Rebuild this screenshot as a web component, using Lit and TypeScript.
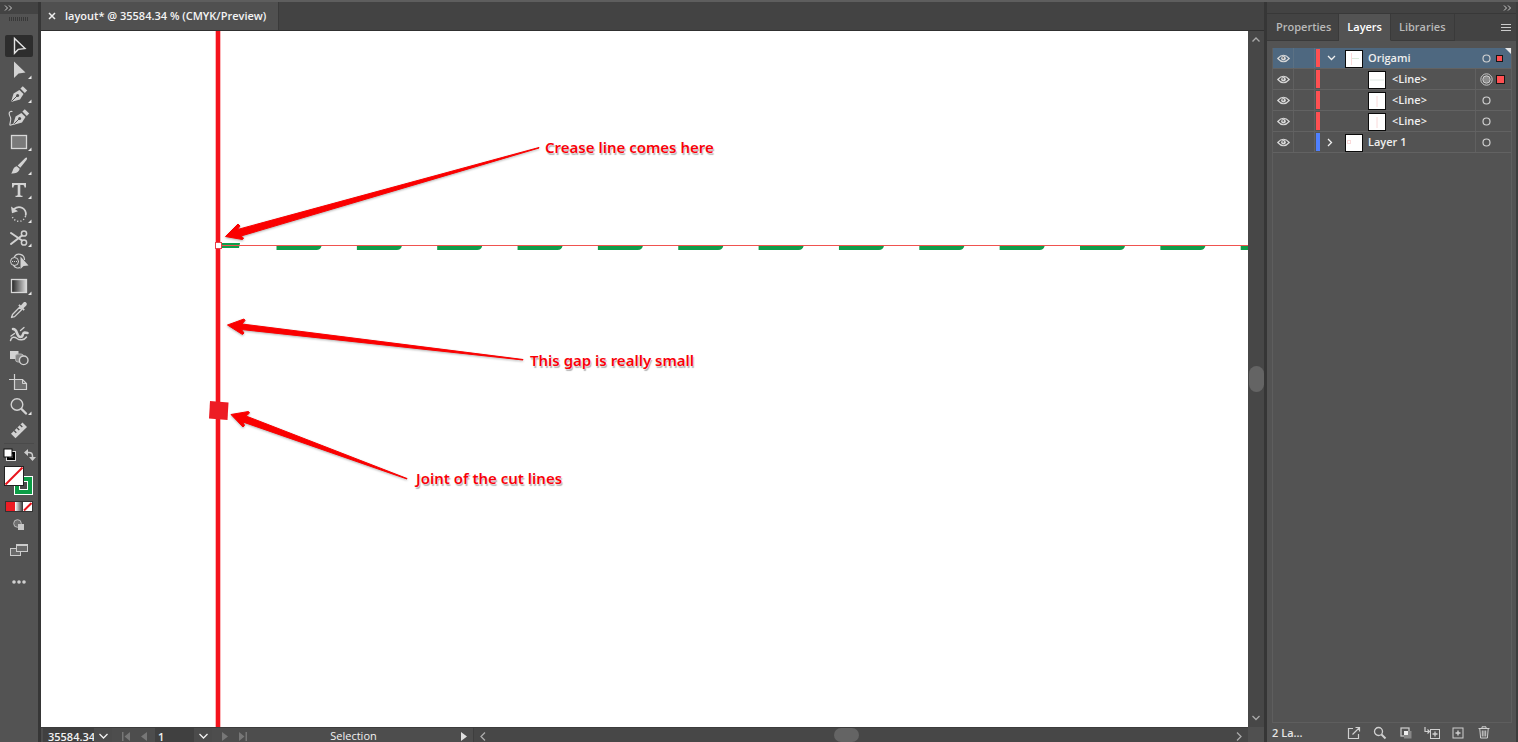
import { LitElement, html, svg, css, nothing } from "lit";
import { customElement, property } from "lit/decorators.js";

const base = css`
  * { box-sizing: border-box; }
  button {
    display: flex; align-items: center; justify-content: center;
    margin: 0; padding: 0; border: 0; background: none; color: inherit; font: inherit;
  }
  svg { display: block; flex: none; }
`;

const line = (d: string, w = 1.3) => svg`<path d=${d} fill="none" stroke="#d2d2d2" stroke-width=${w} stroke-linecap="round" stroke-linejoin="round"/>`;
const solid = (d: string) => svg`<path d=${d} fill="#d2d2d2" fill-rule="evenodd"/>`;

interface Tool { name: string; more?: boolean; art: unknown; }

const nib = svg`
  <path d="M6 19 L8.6 10.6 L14.4 7 L18.5 11 L15 16.6Z" fill="#d2d2d2"/>
  <path d="M15.4 5.6 L17.8 3.2 L22.2 7.6 L19.8 10Z" fill="#d2d2d2"/>
  <path d="M6.4 18.6 L12 13" stroke="#505050"/><circle cx="12.6" cy="12.5" r="1.5" fill="#505050"/>`;

const tools: Tool[] = [
  { name: "Selection", art: svg`<path d="M9.5 3.5 V18.2 L13.2 14.4 L20 13.6Z" fill="none" stroke="#e4e4e4" stroke-width="1.4"/>` },
  { name: "Direct Selection", more: true, art: solid("M9 2.5 V19 L13.6 14.6 L20.5 13.6Z") },
  { name: "Pen", more: true, art: nib },
  { name: "Curvature", art: svg`<g transform="translate(2 -1)">${nib}</g>${line("M7 4.5 C3 4 4 8 5.500 10.500 C7 13.500 3 19 6 18 L9 17", 1.2)}` },
  { name: "Rectangle", more: true, art: svg`<rect x="6.500" y="4.500" width="15" height="13" fill="#7a7a7a" stroke="#d8d8d8" stroke-width="1.300"/>` },
  { name: "Paintbrush", more: true, art: svg`${solid("M21.600 2.500 C22.500 3 22 4.200 21.300 5.200 L15.300 12.700 L12.600 10.400 L20 3.300 C20.600 2.700 21.200 2.300 21.600 2.500Z")}${solid("M11.800 11.300 L14.600 13.700 C14.300 17 10.500 18.700 6 18.600 C8 17.600 7.500 12 11.800 11.300Z")}` },
  { name: "Type", more: true, art: solid("M7 4 H21 V8.600 H19.500 C19.300 6.600 18.900 6 17 6 H15.300 V15.500 C15.300 16.500 15.800 16.700 17.500 16.800 V18 H10.500 V16.800 C12.200 16.700 12.700 16.500 12.700 15.500 V6 H11 C9.100 6 8.700 6.600 8.500 8.600 H7Z") },
  { name: "Rotate", more: true, art: svg`${line("M9 6 C15 1.500 21.500 6 20.800 12", 1.700)}${solid("M6 3.500 L7 10.200 L13 8.200Z")}<path d="M20.600 13 C18.500 20 9 20.500 6.600 12" fill="none" stroke="#d2d2d2" stroke-width="1.400" stroke-dasharray="1.200 2"/>` },
  { name: "Scissors", more: true, art: svg`${line("M6 6 L17 13.500 M6 17 L17 8.500", 2)}<circle cx="19" cy="6.500" r="2.600" fill="none" stroke="#d2d2d2" stroke-width="1.500"/><circle cx="19" cy="15.500" r="2.600" fill="none" stroke="#d2d2d2" stroke-width="1.500"/>` },
  { name: "Shape Builder", art: svg`<circle cx="9.500" cy="10.500" r="4" fill="none" stroke="#d2d2d2"/><path d="M9 6.500 A5.500 5.500 0 0 1 19.500 9 M8.500 14 C9.500 17 13 17.500 15 16.500" fill="none" stroke="#d2d2d2" stroke-width="1.200"/><path d="M7 10.500 H15" stroke="#d2d2d2" stroke-dasharray="1 1"/>${solid("M15.500 5.500 V18 L18.600 15 L23.500 14.400Z")}` },
  { name: "Gradient", more: true, art: svg`<defs><linearGradient id="g"><stop stop-color="#222"/><stop offset="1" stop-color="#ddd"/></linearGradient></defs><rect x="6.500" y="4.500" width="15" height="13" fill="url(#g)" stroke="#d8d8d8" stroke-width="1.300"/>` },
  { name: "Eyedropper", art: svg`${line("M6.500 18.500 L7.500 15.500 L14.600 8.300 L16.800 10.500 L9.600 17.600Z", 1.300)}${solid("M13.300 6.500 L14.600 5.300 L15.900 6.500 L18.500 3.600 C20.200 2 23 4.500 21.300 6.500 L18.500 9.200 L19.800 10.500 L18.500 11.800Z")}` },
  { name: "Puppet Warp", art: svg`${line("M8 6 C13 6 11 13 15 14 C19 14.500 17 9.500 19.500 9.500 L22.500 10", 2.600)}${line("M5.500 17.500 C6.500 13.500 9.500 13.500 12 15.500 C14.500 17.500 19 17.500 21.500 14", 1.500)}${line("M15.500 7.500 L19 4.500 M6 13 L9.500 10.500", 1.300)}` },
  { name: "Blend", art: svg`<rect x="5" y="4" width="8.500" height="8" fill="#d2d2d2"/><rect x="10.500" y="7" width="8" height="8" rx="2.500" fill="#858585" stroke="#b5b5b5"/><circle cx="18.700" cy="13.300" r="4.300" fill="#555" stroke="#d2d2d2" stroke-width="1.400"/>` },
  { name: "Artboard", art: svg`<path d="M9.500 8.500 H17.500 L21.500 12.500 V18.500 H9.500Z" fill="#707070" stroke="#d2d2d2" stroke-width="1.200"/><path d="M17.500 8.500 V12.500 H21.500" fill="none" stroke="#d2d2d2"/><path d="M4 8.500 H9 M9.500 3 V8" stroke="#d2d2d2" stroke-width="1.200"/>` },
  { name: "Zoom", more: true, art: svg`<circle cx="12" cy="9.500" r="5.800" fill="#5c5c5c" stroke="#d2d2d2" stroke-width="1.400"/>${line("M16.500 14 L21 18.500", 2.400)}` },
  { name: "Measure", art: svg`<path d="M6 14.800 L17.500 3.500 L22 8 L10.500 19.200Z" fill="#d2d2d2"/><path d="M9 11.500 L11.300 13.800 M12 8.700 L14.300 11 M15 5.700 L17.300 8" stroke="#505050" stroke-width="1.300"/>` },
];

@customElement("tool-bar")
class ToolBar extends LitElement {
  static styles = [base, css`
    :host { display: flex; flex-direction: column; background: #535353; overflow: hidden; }
    .head { height: 12px; flex: none; background: #434343; padding: 3px 4px; }
    .grip { height: 4px; flex: none; width: 20px; margin: 3px auto 14px;
      background: repeating-linear-gradient(90deg, #383838 0 1px, transparent 1px 2px); }
    .tools { display: flex; flex-direction: column; gap: 2px; padding: 0 5px; }
    .tool { height: 22px; width: 28px; border-radius: 2px; }
    .tool.on { background: #2d2d2d; }
    .rule { height: 1px; margin: 2px 4px 4px; background: #4a4a4a; }
    .pair { display: flex; justify-content: space-between; padding: 0 1px 0 3px; height: 14px; }
    .paint { height: 34px; width: 32px; margin: 2px 4px 0; }
    .modes { display: flex; margin: 3px 5px 0; border: 1px solid #333; }
    .mode { flex: 1; height: 9px; }
    .red { background: #ed1c24; }
    .grad { background: linear-gradient(90deg, #fff, #333); }
    .none { background: #fff; }
    .view { height: 24px; margin: 1px 5px 0; }
    .more { height: 20px; margin-top: 10px; }
  `];
  render() {
    return html`
      <div class="head"><svg width="9" height="6"><path d="M1 .5 L3.500 3 L1 5.500 M5 .5 L7.500 3 L5 5.500" fill="none" stroke="#ccc"/></svg></div>
      <div class="grip"></div>
      <div class="tools">
        ${tools.map((t, i) => html`<button class="tool ${i === 0 ? "on" : ""}" aria-label=${t.name}>
          <svg width="28" height="22" viewBox="0 0 28 22">${t.art}${t.more ? svg`<path d="M26.500 16.500 V20 H23Z" fill="#e8e8e8"/>` : nothing}</svg>
        </button>`)}
      </div>
      <div class="rule"></div>
      <div class="pair">
        <button aria-label="Default fill and stroke"><svg width="14" height="14"><rect x="4.500" y="4.500" width="7" height="7" fill="none" stroke="#000" stroke-width="3"/><rect x="3.500" y="3.500" width="9" height="9" fill="none" stroke="#ddd"/><rect x="1" y="1" width="8" height="8" fill="#fff" stroke="#111"/></svg></button>
        <button aria-label="Swap fill and stroke"><svg width="14" height="14"><path d="M3 4.500 H6 Q9.500 4.500 9.500 8 V10" fill="none" stroke="#ccc" stroke-width="1.500"/><path d="M5 1 V8 L1 4.500Z M6 9 H13 L9.500 13Z" fill="#ccc"/></svg></button>
      </div>
      <button class="paint" aria-label="Fill and stroke">
        <svg width="32" height="34"><rect x="10" y="12" width="19" height="19" fill="#fff"/><rect x="13" y="15" width="13" height="13" fill="#4c4c4c" stroke="#0c9d46" stroke-width="4"/><rect x="15.500" y="17.500" width="8" height="8" fill="#4c4c4c" stroke="#fff"/>
        <rect x=".5" y="2.500" width="19" height="19" fill="#fff" stroke="#222"/><path d="M1.500 20.500 L18.500 3.500" stroke="#e8141c" stroke-width="2"/></svg>
      </button>
      <div class="modes">
        <button class="mode red" aria-label="Color"></button><button class="mode grad" aria-label="Gradient"></button>
        <button class="mode none" aria-label="None"><svg width="9" height="9"><path d="M1 8.500 L8.500 1" stroke="#e8141c" stroke-width="2"/></svg></button>
      </div>
      <button class="view" aria-label="Drawing mode"><svg width="12" height="12"><circle cx="4.500" cy="4.500" r="3.800" fill="#707070" stroke="#bdbdbd"/><rect x="5" y="5" width="6" height="6" fill="#c8c8c8"/></svg></button>
      <button class="view" aria-label="Screen mode"><svg width="20" height="14"><rect x="1.500" y="5.500" width="10" height="7" fill="#6a6a6a" stroke="#ccc"/><rect x="7.500" y="1.500" width="11" height="7" fill="#6a6a6a" stroke="#ccc"/><path d="M7 2 H19" stroke="#ccc" stroke-width="2"/></svg></button>
      <button class="more" aria-label="Edit toolbar"><svg width="16" height="4"><g fill="#d0d0d0"><circle cx="3" cy="2" r="1.800"/><circle cx="8" cy="2" r="1.800"/><circle cx="13" cy="2" r="1.800"/></g></svg></button>`;
  }
}

@customElement("art-canvas")
class ArtCanvas extends LitElement {
  static styles = [base, css`
    :host { display: block; position: relative; overflow: hidden; background: #fff; }
    .art { width: 100%; height: 100%; }
    .note { position: absolute; font: 600 15px/20px "Noto Sans", sans-serif; color: #f80008; white-space: nowrap;
      text-shadow: 0 0 1px #fff, 0 0 1px #fff, 1px 2px 1px rgba(0, 0, 0, .3); }
    .crease { left: 504px; top: 106px; }
    .gap { left: 489px; top: 319px; }
    .joint { left: 375px; top: 437px; }
  `];
  render() {
    const dashes = Array.from({ length: 40 }, (_, i) => 235.5 + i * 80.35);
    return html`
      <svg class="art">
        <rect x="174.700" y="0" width="4.600" height="100%" fill="#f5131c"/>
        <path d="M169 370 L187.500 371.500 L186.500 389 L168 387.500Z" fill="#ed1c24"/>
        <path d="M180 212 H199 L198 217 H180Z" fill="#0f9d4a"/>
        ${dashes.map((x) => svg`<path d="M${x} 215 h45 q-1 4 -5 4 h-40Z" fill="#0f9d4a"/>`)}
        <rect x="178" y="214" width="100%" height="1" fill="#f0524f"/>
        <rect x="174.500" y="211.500" width="6" height="6" fill="#fff" stroke="#e8404a"/>
        <g fill="#fa0000" stroke="#fa0000" stroke-linejoin="round" filter="drop-shadow(0 1px 1px rgba(0,0,0,.3))">
          <path d="M184.500 205.500 L197 193 L199 195 L196.500 198.500 L498 116.500 L498 117 L200 205 L202.500 207 L201.500 208.500Z"/>
          <path d="M186.500 294 L203 288 L204 289.500 L201 293 L482 328.500 L482 329 L200.500 298.500 L203 302 L201.500 303.500Z"/>
          <path d="M190 383.500 L207.500 380.500 L208.500 382 L205 385 L366 447.500 L366 448 L202 391 L203.500 394.500 L202 396Z"/>
        </g>
      </svg>
      <span class="note crease">Crease line comes here</span>
      <span class="note gap">This gap is really small</span>
      <span class="note joint">Joint of the cut lines</span>`;
  }
}

const chevron = (d: string, w: number, h: number) => html`<svg width=${w} height=${h}><path d=${d} fill="none" stroke="currentColor" stroke-width="1.300"/></svg>`;

@customElement("status-bar")
class StatusBar extends LitElement {
  static styles = [base, css`
    :host { display: flex; box-sizing: border-box; height: 15px; overflow: hidden; background: #4d4d4d; border-top: 1px solid #3c3c3c;
      font: 11px/16px "Open Sans", sans-serif; color: #f2f2f2; }
    input { height: 17px; border: 0; padding: 0 0 0 5px; margin: 0; background: #404040; color: inherit; font: inherit; font-weight: 600; outline: 0; }
    .zoom { width: 51px; margin-left: 2px; }
    .page { width: 39px; margin-left: 2px; padding-left: 3px; }
    button { height: 16px; width: 18px; flex: none; }
    .off { color: #777; }
    .drop { background: #4b4b4b; }
    .first { margin-left: 5px; }
    .next { margin-left: 4px; }
    .mode { flex: none; width: 203px; text-align: center; }
    .scroll { flex: 1; display: flex; justify-content: space-between; background: #474747; color: #aaa; border-left: 1px solid #3e3e3e; }
    .thumb { width: 25px; height: 14px; border-radius: 7px; background: #646464; margin-right: 30px; }
  `];
  render() {
    return html`
      <input class="zoom" aria-label="Zoom level" value="35584.34">
      <button class="drop" aria-label="Zoom presets">${chevron("M.5 1 L4.500 5 L8.500 1", 9, 7)}</button>
      <button class="off first" aria-label="First artboard"><svg width="10" height="9"><path d="M1 0 H2.500 V9 H1Z M9 0 V9 L3.500 4.500Z" fill="currentColor"/></svg></button>
      <button class="off" aria-label="Previous artboard"><svg width="6" height="9"><path d="M6 0 V9 L0 4.500Z" fill="currentColor"/></svg></button>
      <input class="page" aria-label="Artboard" value="1">
      <button class="drop" aria-label="Choose artboard">${chevron("M.5 1 L4.500 5 L8.500 1", 9, 7)}</button>
      <button class="off next" aria-label="Next artboard"><svg width="6" height="9"><path d="M0 0 V9 L6 4.500Z" fill="currentColor"/></svg></button>
      <button class="off" aria-label="Last artboard"><svg width="10" height="9"><path d="M9 0 H7.500 V9 H9Z M1 0 V9 L6.500 4.500Z" fill="currentColor"/></svg></button>
      <span class="mode">Selection</span>
      <button aria-label="Status menu"><svg width="6" height="9"><path d="M0 0 V9 L6 4.500Z" fill="#e0e0e0"/></svg></button>
      <div class="scroll">
        <button aria-label="Scroll left">${chevron("M5 .5 L1 4.500 L5 8.500", 6, 9)}</button>
        <div class="thumb"></div>
        <button aria-label="Scroll right">${chevron("M1 .5 L5 4.500 L1 8.500", 6, 9)}</button>
      </div>`;
  }
}

interface Row { name: string; color: string; child?: boolean; open?: boolean; sel?: boolean; art: unknown; mark?: "small" | "large"; }

const vline = svg`<path d="M8 3 V14" stroke="#fadada"/>`;
const rows: Row[] = [
  { name: "Origami", color: "#ff5052", open: true, sel: true, mark: "small", art: svg`<path d="M5.500 2 V14" stroke="#fadada"/><path d="M6 7.500 H13" stroke="#dcebdc"/>` },
  { name: "<Line>", color: "#ff5052", child: true, mark: "large", art: svg`<path d="M1 8 H15" stroke="#dfe9e3"/>` },
  { name: "<Line>", color: "#ff5052", child: true, art: vline },
  { name: "<Line>", color: "#ff5052", child: true, art: vline },
  { name: "Layer 1", color: "#4f80ff", art: svg`<rect x="1.500" y="5.500" width="3" height="3" fill="none" stroke="#fadada"/>` },
];

@customElement("layer-row")
class LayerRow extends LitElement {
  @property({ attribute: false }) row!: Row;
  static styles = [base, css`
    :host { display: block; }
    .row { display: flex; height: 21px; border-bottom: 1px solid #626262; align-items: stretch; }
    .sel { background: #4e6880; }
    .eye { width: 21px; border-right: 1px solid #606060; color: #d8d8d8; }
    .lock { width: 21px; border-right: 1px solid #606060; }
    .sel .eye, .sel .lock { border-color: #5b7184; }
    .bar { width: 4px; margin: 1px 7px 1px 1px; }
    .twist { width: 11px; color: #f0f0f0; margin-right: 7px; justify-content: flex-start; }
    .thumb { width: 18px; height: 18px; margin: 1px 5px 0 0; border: 1px solid #0a0a0a; background: #fff; align-self: center; flex: none; }
    .child { margin-left: 23px; margin-right: 6px; }
    .name { flex: 1; justify-content: flex-start; font: 600 11px/20px "Open Sans", sans-serif; color: #efefef; text-align: left; }
    .target { width: 21px; border-left: 1px solid #606060; }
    .sel .target { border-color: transparent; }
    .mark { width: 15px; display: flex; align-items: center; padding-left: 1px; position: relative; }
    .box { width: 5px; height: 5px; background: #ff5052; outline: 1px solid #161616; }
    .large { width: 7px; height: 7px; }
    .corner { position: absolute; right: 0; top: 0; }
  `];
  render() {
    const r = this.row;
    return html`<div class="row ${r.sel ? "sel" : ""}">
      <button class="eye" aria-label="Toggle visibility"><svg width="13" height="9"><path d="M.8 4.500 Q6.500 -2 12.200 4.500 Q6.500 11 .8 4.500Z" fill="none" stroke="currentColor" stroke-width="1.200"/><circle cx="6.500" cy="4.300" r="2.300" fill="currentColor"/><circle cx="6.200" cy="3.900" r=".8" fill="#555"/></svg></button>
      <button class="lock" aria-label="Toggle lock"></button>
      <div class="bar" style="background:${r.color}"></div>
      <button class="twist" aria-label="Expand">${r.child ? nothing : r.open ? chevron("M1 1 L4.500 4.500 L8 1", 9, 6) : chevron("M1 1 L4.500 4.500 L1 8", 6, 9)}</button>
      <div class="thumb ${r.child ? "child" : ""}"><svg width="16" height="16">${r.art}</svg></div>
      <button class="name">${r.name}</button>
      <button class="target" aria-label="Target"><svg width="13" height="13">${r.mark === "large"
        ? svg`<circle cx="6.500" cy="6.500" r="5.700" fill="none" stroke="#c8c8c8"/><circle cx="6.500" cy="6.500" r="3.700" fill="#8c8c8c" stroke="#d0d0d0"/>`
        : svg`<circle cx="6.500" cy="6.500" r="3.500" fill="none" stroke="#d0d0d0" stroke-width="1.200"/>`}</svg></button>
      <div class="mark">${r.mark ? html`<div class="box ${r.mark}"></div>` : nothing}
        ${r.sel ? html`<svg class="corner" width="6" height="6"><path d="M0 0 H6 V6Z" fill="#e8e8e8"/></svg>` : nothing}</div>
    </div>`;
  }
}

@customElement("layers-panel")
class LayersPanel extends LitElement {
  static styles = [base, css`
    :host { display: flex; flex-direction: column; background: #535353; border-right: 2px solid #3d3d3d; overflow: hidden; }
    .head { height: 12px; flex: none; background: #434343; display: flex; justify-content: flex-end; padding: 3px 4px; border-bottom: 1px solid #383838; }
    .tabs { display: flex; height: 27px; flex: none; background: #434343; font: 600 11px/26px "Open Sans", sans-serif; color: #b9b9b9; }
    .tab { border-right: 1px solid #3a3a3a; padding: 0 8px; border-bottom: 1px solid #3a3a3a; }
    .tab:first-child { padding-left: 9px; padding-right: 7px; }
    .tab.on { background: #535353; color: #fff; border-bottom-color: #535353; }
    .menu { margin-left: auto; padding-right: 5px; }
    .list { flex: 1; margin: 7px 4px 0 5px; border: 1px solid #5e5e5e; border-top: 0; }
    .foot { display: flex; align-items: center; height: 19px; flex: none; padding: 0 24px 0 5px; font: 600 11px/18px "Open Sans", sans-serif; color: #e6e6e6; }
    .icons { display: flex; margin-left: auto; gap: 10px; }
    .icons button { width: 16px; height: 16px; }
  `];
  render() {
    const s = "#d0d0d0";
    return html`
      <div class="head"><svg width="9" height="6"><path d="M1 .5 L3.500 3 L1 5.500 M5 .5 L7.500 3 L5 5.500" fill="none" stroke="#ccc"/></svg></div>
      <div class="tabs"><button class="tab">Properties</button><button class="tab on">Layers</button><button class="tab">Libraries</button>
        <button class="menu" aria-label="Panel menu"><svg width="10" height="8"><path d="M0 .5 H10 M0 3.500 H10 M0 6.500 H10" stroke="#ccc"/></svg></button></div>
      <div class="list">${rows.map((r) => html`<layer-row .row=${r}></layer-row>`)}</div>
      <div class="foot"><span>2 La...</span>
        <div class="icons">
          <button aria-label="Export"><svg width="14" height="14"><path d="M6 2.500 H1.500 V12.500 H11.500 V8 M5.500 8.500 L12 2 M8.500 1.500 H12.500 V5.500" fill="none" stroke=${s} stroke-width="1.200"/></svg></button>
          <button aria-label="Locate object"><svg width="14" height="14"><circle cx="5.500" cy="5.500" r="4" fill="none" stroke=${s} stroke-width="1.300"/><path d="M8.500 8.500 L12.500 12.500" stroke=${s} stroke-width="2"/></svg></button>
          <button aria-label="Make clipping mask"><svg width="12" height="12"><rect x="1" y="1" width="8" height="8" fill="none" stroke=${s} stroke-width="1.200"/><rect x="4" y="4" width="7.500" height="7.500" fill="#888"/><rect x="4" y="4" width="4" height="4" fill="#eee"/></svg></button>
          <button aria-label="New sublayer"><svg width="16" height="14"><path d="M1 1 V5.500 H5 M3.500 3.500 L5.500 5.500 L3.500 7.500" fill="none" stroke=${s} stroke-width="1.200"/><rect x="6.500" y="3.500" width="9" height="9" fill="none" stroke=${s}/><path d="M11 5.500 V10.500 M8.500 8 H13.500" stroke=${s} stroke-width="1.300"/></svg></button>
          <button aria-label="New layer"><svg width="12" height="12"><rect x="1" y="1" width="10" height="10" fill="none" stroke=${s}/><path d="M6 3.500 V8.500 M3.500 6 H8.500" stroke=${s} stroke-width="1.400"/></svg></button>
          <button aria-label="Delete"><svg width="12" height="13"><path d="M.5 2.500 H11.500 M4 2.500 V.8 H8 V2.500 M1.800 3 L2.600 12 H9.400 L10.200 3 M4.300 4.500 V10.500 M6 4.500 V10.500 M7.700 4.500 V10.500" fill="none" stroke=${s}/></svg></button>
        </div></div>`;
  }
}

@customElement("app-root")
class AppRoot extends LitElement {
  static styles = [base, css`
    :host { display: grid; box-sizing: border-box; grid-template-columns: 38px minmax(0, 1fr) 251px; grid-template-rows: minmax(0, 1fr);
      column-gap: 3px; height: 100vh; overflow: hidden; background: #363636; border-top: 2px solid #5e5e5e; }
    .doc { display: grid; grid-template-columns: minmax(0, 1fr) 16px; grid-template-rows: 29px minmax(0, 1fr) 15px; }
    .tabs { grid-column: 1 / 3; background: #434343; border-bottom: 1px solid #303030; display: flex; }
    .tab { display: flex; align-items: center; gap: 9px; padding: 0 12px 0 7px; background: #505050; border-right: 1px solid #3a3a3a;
      font: 600 11px/28px "Open Sans", sans-serif; color: #f4f4f4; white-space: nowrap; }
    .vscroll { display: flex; flex-direction: column; justify-content: space-between; align-items: center; background: #474747; color: #aaa; }
    .vscroll button { width: 16px; height: 18px; }
    .thumb { width: 15px; height: 26px; border-radius: 8px; background: #646464; }
    .corner { background: #505050; }
  `];
  render() {
    return html`
      <tool-bar></tool-bar>
      <main class="doc">
        <div class="tabs"><div class="tab"><button aria-label="Close document"><svg width="8" height="8"><path d="M1 1 L7 7 M7 1 L1 7" stroke="#eee" stroke-width="1.500"/></svg></button><span>layout* @ 35584.34 % (CMYK/Preview)</span></div></div>
        <art-canvas></art-canvas>
        <div class="vscroll">
          <button aria-label="Scroll up">${chevron("M.5 4.500 L4 1 L7.500 4.500", 8, 6)}</button>
          <div class="thumb"></div>
          <button aria-label="Scroll down">${chevron("M.5 1 L4 4.500 L7.500 1", 8, 6)}</button>
        </div>
        <status-bar></status-bar><div class="corner"></div>
      </main>
      <layers-panel></layers-panel>`;
  }
}
